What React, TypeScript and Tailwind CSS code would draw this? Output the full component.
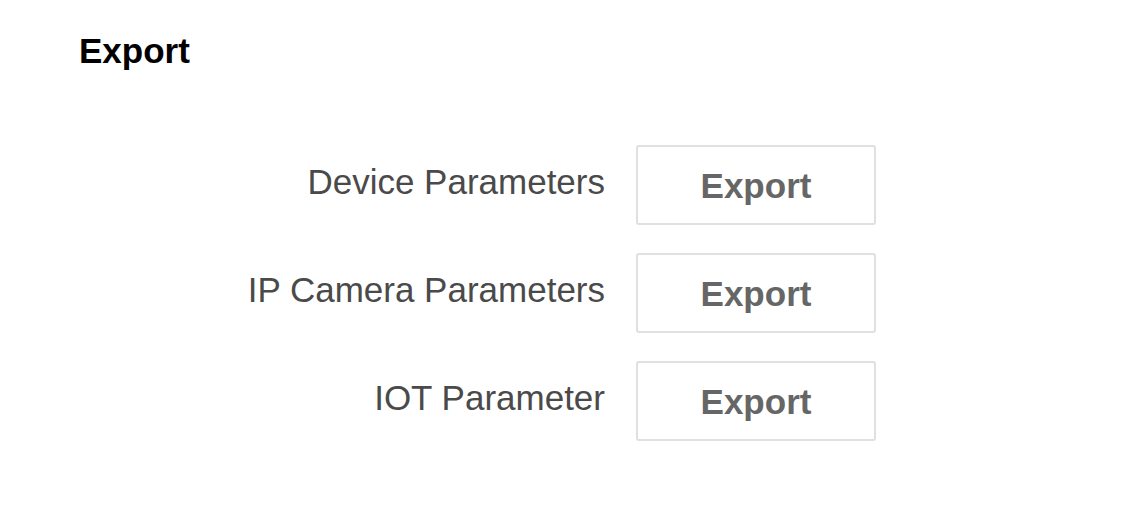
const rows = ["Device Parameters", "IP Camera Parameters", "IOT Parameter"];

export default function App() {
  return (
    <div className="w-[1145px] h-[510px] bg-white font-['Liberation_Sans',Arial,sans-serif]">
      <h1 className="pl-[79px] pt-[31px] text-[35px] leading-[40px] font-bold text-black">Export</h1>
      <div className="mt-[74px] flex flex-col gap-[28px]">
        {rows.map((label) => (
          <div key={label} className="flex items-center">
            <span className="w-[605px] text-right text-[35px] leading-[40px] text-[#4a4a4a] -mt-[7px]">{label}</span>
            <button className="ml-[31px] w-[240px] h-[80px] rounded-[3px] border-2 border-[#e0e0e0] bg-white text-[35px] leading-[40px] font-bold text-[#666666] pt-[2px]">
              Export
            </button>
          </div>
        ))}
      </div>
    </div>
  );
}
